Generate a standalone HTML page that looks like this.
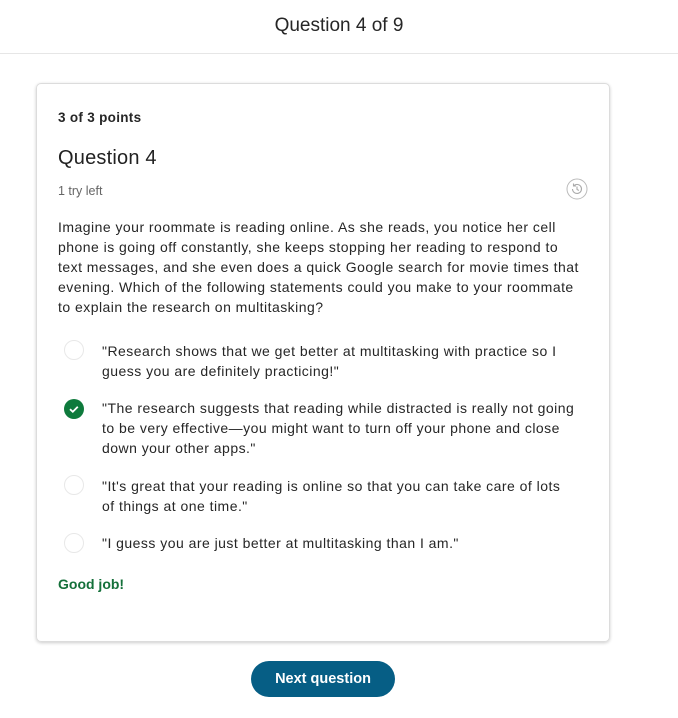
<!DOCTYPE html>
<html><head><meta charset="utf-8"><style>
*{margin:0;padding:0;box-sizing:border-box}
body{width:678px;height:718px;background:#fff;font-family:"Liberation Sans",Arial,sans-serif;color:#262626;position:relative;overflow:hidden}
.hdr{position:absolute;left:0;top:0;width:678px;height:54px;border-bottom:1px solid #e6e6e6;text-align:center;font-size:19px;line-height:52px;color:#262626}
.card{position:absolute;left:36px;top:83px;width:574px;height:559px;border:1px solid #dcdcdc;border-radius:5px;box-shadow:0 1px 3px rgba(0,0,0,.2)}
.t{position:absolute;white-space:nowrap;font-size:14px;line-height:20px;letter-spacing:0.47px}
.circ{position:absolute;left:64px;width:20px;height:20px;border-radius:50%;border:1px solid #e8e8e8}
.btn{position:absolute;left:251px;top:661px;width:144px;height:36px;border-radius:18px;background:#065e85;color:#fff;font-weight:bold;font-size:14.5px;line-height:36px;text-align:center}
</style></head><body>
<div class="hdr">Question 4 of 9</div>
<div class="card"></div>
<div class="t" style="left:58px;top:108px;font-weight:bold;font-size:13.5px;letter-spacing:0.3px">3 of 3 points</div>
<div class="t" style="left:58px;top:145px;font-size:20px;line-height:26px;color:#222;letter-spacing:0.2px">Question 4</div>
<div class="t" style="left:58px;top:181px;font-size:12.5px;color:#666;letter-spacing:0">1 try left</div>
<svg style="position:absolute;left:566px;top:178px" width="22" height="22" viewBox="0 0 22 22"><circle cx="11" cy="11" r="10" fill="none" stroke="#bbb" stroke-width="1"/><path d="M6.5 11a4.5 4.5 0 1 0 1.3-3.2M7.5 5.5v2.5h2.5M11 8.5v2.8l1.8 1.2" fill="none" stroke="#aaa" stroke-width="1.1"/></svg>
<div class="t" style="left:58px;top:217px">Imagine your roommate is reading online. As she reads, you notice her cell</div>
<div class="t" style="left:58px;top:237px">phone is going off constantly, she keeps stopping her reading to respond to</div>
<div class="t" style="left:58px;top:257px">text messages, and she even does a quick Google search for movie times that</div>
<div class="t" style="left:58px;top:277px">evening. Which of the following statements could you make to your roommate</div>
<div class="t" style="left:58px;top:297px">to explain the research on multitasking?</div>
<div class="circ" style="top:340px"></div>
<div class="t" style="left:102px;top:341px">"Research shows that we get better at multitasking with practice so I</div>
<div class="t" style="left:102px;top:361px">guess you are definitely practicing!"</div>
<svg style="position:absolute;left:63px;top:398px" width="22" height="22" viewBox="0 0 22 22"><circle cx="11" cy="11" r="10" fill="#0e7a3c"/><path d="M7 11.2l2.8 2.6 5-5" fill="none" stroke="#fff" stroke-width="1.8"/></svg>
<div class="t" style="left:102px;top:398px">"The research suggests that reading while distracted is really not going</div>
<div class="t" style="left:102px;top:418px">to be very effective—you might want to turn off your phone and close</div>
<div class="t" style="left:102px;top:438px">down your other apps."</div>
<div class="circ" style="top:475px"></div>
<div class="t" style="left:102px;top:476px">"It's great that your reading is online so that you can take care of lots</div>
<div class="t" style="left:102px;top:496px">of things at one time."</div>
<div class="circ" style="top:533px"></div>
<div class="t" style="left:102px;top:533px">"I guess you are just better at multitasking than I am."</div>
<div class="t" style="left:58px;top:574px;font-weight:bold;color:#14703a;letter-spacing:0">Good job!</div>
<div class="btn">Next question</div>
</body></html>
